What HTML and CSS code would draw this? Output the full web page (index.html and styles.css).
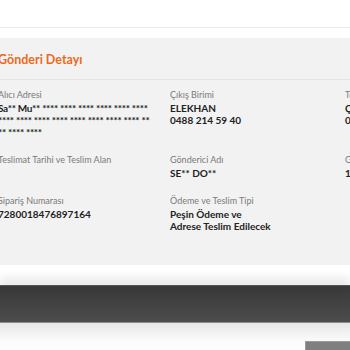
FILE: index.html
```html
<!DOCTYPE html>
<html lang="tr">
<head>
    <meta charset="UTF-8">
    <meta name="viewport" content="width=device-width, initial-scale=1.0">
    <title>Gönderi Detayı</title>
    <link rel="stylesheet" href="styles.css">
</head>
<body>
    <div class="top-strip"></div>

    <div class="detail-panel">
        <div class="detail-inner">
            <h2 class="detail-title">Gönderi Detayı</h2>

            <div class="detail-grid">
                <div class="detail-item">
                    <div class="detail-label">Alıcı Adresi</div>
                    <div class="detail-value address">Sa** Mu** **** **** **** **** **** ****<br>**** **** **** **** **** **** **** **** **<br>** **** ****</div>
                </div>
                <div class="detail-item">
                    <div class="detail-label">Çıkış Birimi</div>
                    <div class="detail-value">ELEKHAN<br>0488 214 59 40</div>
                </div>
                <div class="detail-item">
                    <div class="detail-label">Teslim Birimi</div>
                    <div class="detail-value">ÇANKAYA<br>0312 441 20 10</div>
                </div>

                <div class="detail-item">
                    <div class="detail-label">Teslimat Tarihi ve Teslim Alan</div>
                    <div class="detail-value"></div>
                </div>
                <div class="detail-item">
                    <div class="detail-label">Gönderici Adı</div>
                    <div class="detail-value">SE** DO**</div>
                </div>
                <div class="detail-item">
                    <div class="detail-label">Gönderi Tarihi</div>
                    <div class="detail-value">12.03.2024</div>
                </div>

                <div class="detail-item">
                    <div class="detail-label">Sipariş Numarası</div>
                    <div class="detail-value">7280018476897164</div>
                </div>
                <div class="detail-item">
                    <div class="detail-label">Ödeme ve Teslim Tipi</div>
                    <div class="detail-value">Peşin Ödeme ve<br>Adrese Teslim Edilecek</div>
                </div>
                <div class="detail-item"></div>
            </div>
        </div>
    </div>

    <div class="white-band"></div>
    <div class="dark-bar"></div>

    <div class="footer-row">
        <div class="footer-button"></div>
    </div>
</body>
</html>
```

FILE: styles.css
```css
body {
    margin: 0;
    background-color: white;
    font-family: Lato, "Open Sans", sans-serif;
    overflow: hidden;
}

.top-strip {
    height: 27px;
    border-bottom: 1px solid #ebebeb;
    margin-bottom: 10px;
}

.detail-panel {
    background-color: #f2f2f2;
    overflow: hidden;
    padding-bottom: 33px;
}

.detail-inner {
    margin-left: -2px;
}

.detail-title {
    margin: 0;
    padding: 14px 0 11px;
    font-size: 12.5px;
    line-height: 16px;
    font-weight: 700;
    color: #ec6a1d;
    border-bottom: 1px solid #e4e4e4;
}

.detail-grid {
    display: grid;
    grid-template-columns: 172px 175px 175px;
    row-gap: 16px;
    padding-top: 9px;
    width: 600px;
}

.detail-label {
    font-size: 9px;
    line-height: 12px;
    color: #7a7a7a;
    margin-bottom: 1px;
    white-space: nowrap;
}

.detail-value {
    font-size: 10px;
    line-height: 12px;
    font-weight: 700;
    color: #222;
    white-space: nowrap;
}

.detail-value.address {
    letter-spacing: -0.3px;
}

.white-band {
    height: 12px;
    background-color: white;
}

.dark-bar {
    height: 36px;
    margin-top: 8px;
    background: linear-gradient(#383838, #4c4c4c);
    border-top: 1px solid #555;
    border-bottom: 1px solid #8a8a8a;
    box-shadow: 0 -8px 8px #ececec;
}

.footer-row {
    display: flex;
    justify-content: flex-end;
    height: 30px;
    padding-top: 18px;
    box-sizing: border-box;
    background: linear-gradient(#e6e6e6, #fbfbfb 60%, white);
}

.footer-button {
    width: 44px;
    height: 12px;
    background-color: #7f7f7f;
    border-top: 1px solid #9a9a9a;
    border-left: 1px solid #999;
}
```
